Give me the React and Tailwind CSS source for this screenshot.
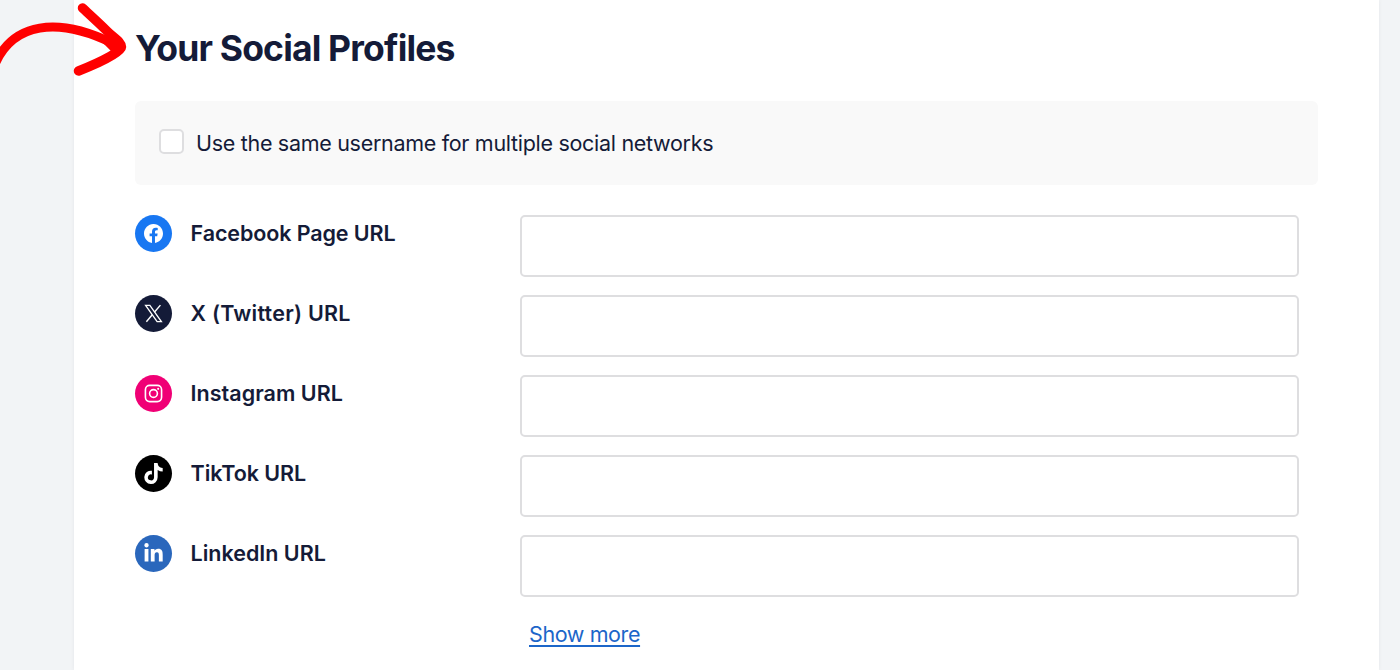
import React from 'react';
import { BsFacebook } from 'react-icons/bs';
import { FaLinkedinIn, FaTiktok } from 'react-icons/fa6';

const XIcon = ({ className }) => (
  <svg className={className} viewBox="0 0 20 20" fill="none" stroke="currentColor">
    <path d="M1.700 1.500H6.200L18.300 18.500H13.800Z" strokeWidth="1.400" />
    <path d="M17.300 1.200L11.100 8.400M8.700 11.300L2.500 18.700" strokeWidth="1.500" />
  </svg>
);

const InstagramIcon = ({ className }) => (
  <svg className={className} viewBox="0 0 20 20" fill="none" stroke="currentColor" strokeWidth="1.700">
    <rect x="1.500" y="1.500" width="17" height="17" rx="4.500" />
    <circle cx="10" cy="10" r="4.100" />
    <circle cx="14.900" cy="5.100" r="1.100" fill="currentColor" stroke="none" />
  </svg>
);

const profiles = [
  { id: 'facebook', label: 'Facebook Page URL', icon: BsFacebook, bg: 'bg-[#1877f2]', size: 'w-[19px] h-[19px]', tracking: 'tracking-[-0.1px]' },
  { id: 'x', label: 'X (Twitter) URL', icon: XIcon, bg: 'bg-[#141b38]', size: 'w-[19px] h-[19px]', tracking: 'tracking-[0.25px]' },
  { id: 'instagram', label: 'Instagram URL', icon: InstagramIcon, bg: 'bg-[#f00075]', size: 'w-[19px] h-[19px]', tracking: 'tracking-[0.05px]' },
  { id: 'tiktok', label: 'TikTok URL', icon: FaTiktok, bg: 'bg-black', size: 'w-[21px] h-[21px]', tracking: 'tracking-[-0.05px]' },
  { id: 'linkedin', label: 'LinkedIn URL', icon: FaLinkedinIn, bg: 'bg-[#2a67bc]', size: 'w-[21px] h-[21px]', tracking: 'tracking-normal' },
];

const ProfileRow = ({ profile }) => {
  const Icon = profile.icon;

  return (
    <div className="flex items-start h-[62px]">
      <label htmlFor={profile.id} className="flex items-center w-[385px] shrink-0">
        <span className={`flex items-center justify-center w-[37px] h-[37px] mr-[18.5px] rounded-full text-white ${profile.bg}`}>
          <Icon className={profile.size} />
        </span>
        <span className={`text-[21.5px] leading-[37px] font-semibold ${profile.tracking}`}>{profile.label}</span>
      </label>
      <input
        id={profile.id}
        type="text"
        className="w-[779px] h-[62px] px-4 text-xl bg-white border-2 border-[#dedee0] rounded-[5px] outline-none"
      />
    </div>
  );
};

const Arrow = () => (
  <svg className="absolute left-0 top-0 w-[130px] h-[80px]" viewBox="0 0 130 80" fill="none" stroke="#ff0000" strokeLinecap="round" strokeLinejoin="round">
    <path d="M-4 62C14 24 56 16 112 43" strokeWidth="9" />
    <path d="M82.500 8C89 14 99 23 107 31C114 38 121.500 42 121.500 47C121.500 51 104 61 78.500 71" strokeWidth="9.500" />
    <path d="M100 38L121 46L112 50Z" fill="#ff0000" strokeWidth="3" />
  </svg>
);

const App = () => {
  return (
    <div className="relative h-[670px] overflow-hidden bg-[#f2f4f6] pl-[74px] pr-[21px] font-['Inter',sans-serif] text-[#141b38]">
      <main className="h-full bg-white pl-[61px] pr-[61px] pt-[27px] shadow-[0_0_4px_rgba(20,27,56,0.06)]">
        <h1 className="text-[35.5px] leading-[44px] font-bold tracking-[-0.82px] whitespace-nowrap">Your Social Profiles</h1>

        <label className="flex items-center h-[84px] mt-[30px] pl-[24px] bg-[#f9f9f9] rounded-md">
          <input type="checkbox" className="appearance-none w-[25px] h-[25px] mr-[12px] -mt-[3px] bg-white border-2 border-[#dedee0] rounded-[5px]" />
          <span className="text-[21.5px] leading-[30px] tracking-[-0.3px]">Use the same username for multiple social networks</span>
        </label>

        <div className="flex flex-col gap-[18px] mt-[30px]">
          {profiles.map((profile) => (
            <ProfileRow key={profile.id} profile={profile} />
          ))}
        </div>

        <a href="#" className="inline-block ml-[394px] mt-[22px] text-[21.5px] leading-[30px] tracking-[-0.4px] text-[#1c66c9] underline decoration-2 underline-offset-[3px]">
          Show more
        </a>
      </main>
      <Arrow />
    </div>
  );
};

export default App;
